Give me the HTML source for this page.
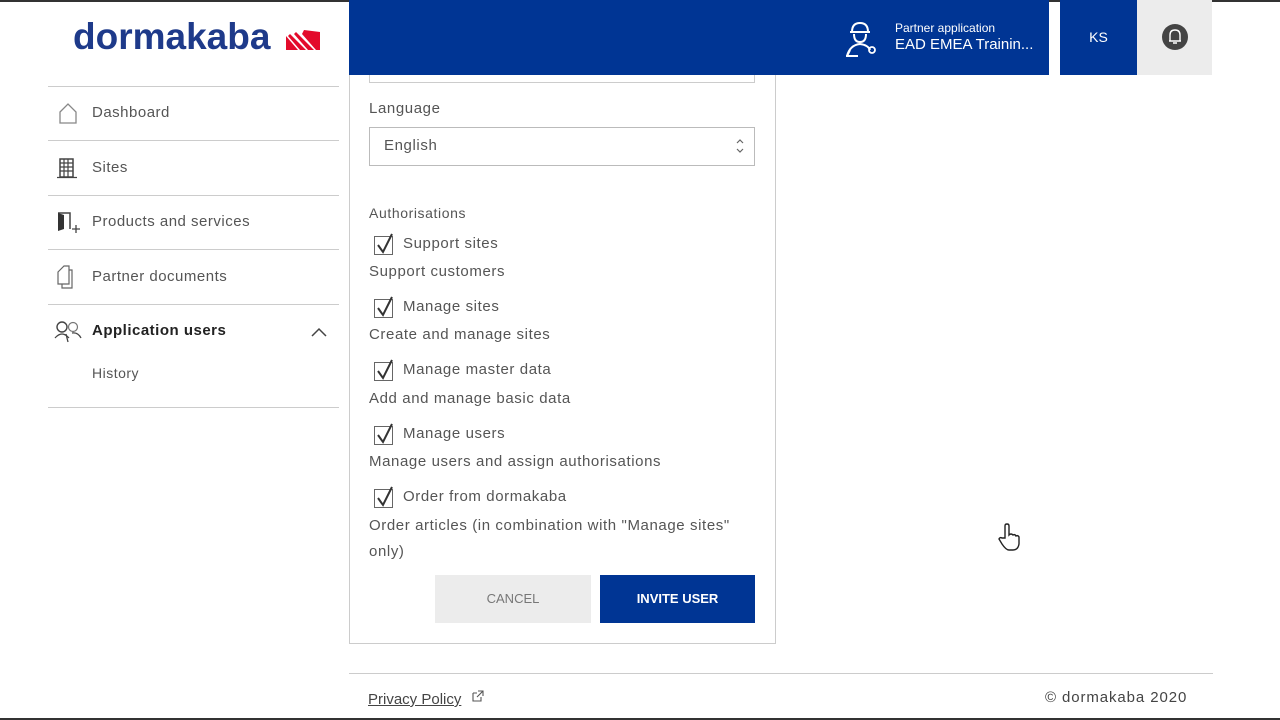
<!DOCTYPE html>
<html><head><style>
*{margin:0;padding:0;box-sizing:border-box}
body{width:1280px;height:720px;position:relative;background:#fff;font-family:"Liberation Sans",sans-serif;color:#444;overflow:hidden}
.a{position:absolute}
.nav{left:48px;width:291px;height:1px;background:#ccc}
.ni{left:92px;font-size:15px;color:#555;letter-spacing:0.5px}
.t{font-size:15px;color:#555;left:369px;letter-spacing:0.6px}
.cb{left:374px;width:19px;height:19px;border:1.5px solid #666;background:#fff}
.cb svg{position:absolute;left:1px;top:-6px}
</style></head><body>
<div class="a" style="left:0;top:0;width:1280px;height:2px;background:#333"></div>
<div class="a" style="left:0;top:718px;width:1280px;height:2px;background:#333"></div>
<div class="a" style="left:73px;top:16px;font-size:37px;font-weight:bold;color:#1e3a8a;letter-spacing:0px">dormakaba</div>
<svg class="a" style="left:286px;top:28px" width="34" height="22"><polygon points="0,8 12,22 0,22" fill="#e30b2b"/><polygon points="4,6 20,22 14,22 2,8" fill="#e30b2b"/><polygon points="10,4 28,22 22,22 8,6" fill="#e30b2b"/><polygon points="18,2 34,4 34,22 30,22 16,6" fill="#e30b2b"/></svg>
<div class="a nav" style="top:86px"></div>
<div class="a nav" style="top:140px"></div>
<div class="a nav" style="top:195px"></div>
<div class="a nav" style="top:249px"></div>
<div class="a nav" style="top:304px"></div>
<div class="a nav" style="top:407px"></div>
<svg class="a" style="left:58px;top:102px" width="20" height="22"><path d="M2 10 L10 2 L18 10 V21 H2 Z" fill="none" stroke="#888" stroke-width="1.3"/></svg>
<svg class="a" style="left:56px;top:157px" width="22" height="22"><rect x="4" y="2" width="13" height="18" fill="none" stroke="#444" stroke-width="1.5"/><path d="M8 2V20M12 2V20M4 6H17M4 10H17M4 14H17M1 20.5H21" stroke="#444" stroke-width="1.2"/></svg>
<svg class="a" style="left:56px;top:211px" width="24" height="24"><path d="M2 2H14V18" fill="none" stroke="#444" stroke-width="1.5"/><path d="M2 2V20L8 18V4Z" fill="#333"/><path d="M16 18H24M20 14V22" stroke="#444" stroke-width="1.3"/></svg>
<svg class="a" style="left:56px;top:264px" width="22" height="26"><path d="M6 6H16V24H6Z" fill="none" stroke="#666" stroke-width="1.2"/><path d="M2 8L8 2H13V20H2Z" fill="#fff" stroke="#666" stroke-width="1.2"/></svg>
<svg class="a" style="left:54px;top:320px" width="28" height="24"><circle cx="8" cy="7" r="5" fill="none" stroke="#444" stroke-width="1.4"/><circle cx="19" cy="7" r="4.5" fill="none" stroke="#777" stroke-width="1.2"/><path d="M1 18 Q8 10 15 18M12 14 L14 22M18 13 Q24 12 27 18" fill="none" stroke="#444" stroke-width="1.3"/></svg>
<div class="a ni" style="top:104px">Dashboard</div>
<div class="a ni" style="top:159px">Sites</div>
<div class="a ni" style="top:213px">Products and services</div>
<div class="a ni" style="top:268px">Partner documents</div>
<div class="a ni" style="top:322px;font-weight:bold;color:#222">Application users</div>
<svg class="a" style="left:310px;top:326px" width="18" height="12"><path d="M2 10L9 3L16 10" fill="none" stroke="#444" stroke-width="1.5"/></svg>
<div class="a ni" style="top:365px;font-size:14px">History</div>

<div class="a" style="left:349px;top:0;width:700px;height:75px;background:#003594"></div>
<svg class="a" style="left:842px;top:20px" width="36" height="38"><path d="M10 12 Q10 3 18 3 Q26 3 26 12 Z M8 12H28" fill="none" stroke="#fff" stroke-width="2"/><path d="M12 14 Q12 22 18 22 Q24 22 24 14" fill="none" stroke="#fff" stroke-width="2"/><path d="M5 36 Q8 25 18 24 Q26 25 28 30M4 36H16M8 30L5 36" fill="none" stroke="#fff" stroke-width="2"/><circle cx="30" cy="30" r="3" fill="none" stroke="#fff" stroke-width="1.8"/></svg>
<div class="a" style="left:895px;top:21px;font-size:12px;color:#fff">Partner application</div>
<div class="a" style="left:895px;top:36px;font-size:15px;color:#fff">EAD EMEA Trainin...</div>
<div class="a" style="left:1060px;top:0;width:77px;height:75px;background:#003594;color:#fff;font-size:14px;text-align:center;line-height:74px">KS</div>
<div class="a" style="left:1137px;top:0;width:75px;height:75px;background:#ececec"></div>
<div class="a" style="left:1162px;top:24px;width:26px;height:26px;border-radius:50%;background:#444"></div>
<svg class="a" style="left:1162px;top:24px" width="26" height="26"><path d="M8 17V11Q8 6 13 6Q18 6 18 11V17H19H7Z M11 19H15" fill="none" stroke="#fff" stroke-width="1.4"/></svg>

<div class="a" style="left:349px;top:75px;width:427px;height:569px;border:1px solid #ccc;border-top:none"></div>
<div class="a" style="left:369px;top:75px;width:386px;height:8px;border:1px solid #ccc;border-top:none"></div>
<div class="a t" style="top:100px">Language</div>
<div class="a" style="left:369px;top:127px;width:386px;height:39px;border:1px solid #bbb"></div>
<div class="a t" style="left:384px;top:137px">English</div>
<svg class="a" style="left:734px;top:137px" width="12" height="18"><path d="M3 6L6 3L9 6M3 12L6 15L9 12" fill="none" stroke="#666" stroke-width="1.2"/></svg>
<div class="a t" style="top:205px;font-size:14px">Authorisations</div>

<div class="a cb" style="top:236px"><svg width="20" height="24"><path d="M2 14L7 21L16 3" fill="none" stroke="#333" stroke-width="2"/></svg></div>
<div class="a t" style="left:403px;top:235px">Support sites</div>
<div class="a t" style="top:263px">Support customers</div>
<div class="a cb" style="top:299px"><svg width="20" height="24"><path d="M2 14L7 21L16 3" fill="none" stroke="#333" stroke-width="2"/></svg></div>
<div class="a t" style="left:403px;top:298px">Manage sites</div>
<div class="a t" style="top:326px">Create and manage sites</div>
<div class="a cb" style="top:362px"><svg width="20" height="24"><path d="M2 14L7 21L16 3" fill="none" stroke="#333" stroke-width="2"/></svg></div>
<div class="a t" style="left:403px;top:361px">Manage master data</div>
<div class="a t" style="top:390px">Add and manage basic data</div>
<div class="a cb" style="top:426px"><svg width="20" height="24"><path d="M2 14L7 21L16 3" fill="none" stroke="#333" stroke-width="2"/></svg></div>
<div class="a t" style="left:403px;top:425px">Manage users</div>
<div class="a t" style="top:453px">Manage users and assign authorisations</div>
<div class="a cb" style="top:489px"><svg width="20" height="24"><path d="M2 14L7 21L16 3" fill="none" stroke="#333" stroke-width="2"/></svg></div>
<div class="a t" style="left:403px;top:488px">Order from dormakaba</div>
<div class="a t" style="top:513px;line-height:26px;width:385px">Order articles (in combination with "Manage sites" only)</div>

<div class="a" style="left:435px;top:575px;width:156px;height:48px;background:#ececec;color:#777;font-size:13px;text-align:center;line-height:48px">CANCEL</div>
<div class="a" style="left:600px;top:575px;width:155px;height:48px;background:#003594;color:#fff;font-size:13px;font-weight:bold;text-align:center;line-height:48px">INVITE USER</div>

<svg class="a" style="left:996px;top:522px" width="26" height="30"><path d="M9 16V4Q9 2 11 2Q13 2 13 4V13Q15 11 17 13Q19 12 20 14Q22 13 23 15V22Q22 28 17 28H13Q10 28 6 22L3 17Q4 15 6 16Z" fill="#fff" stroke="#222" stroke-width="1.4"/></svg>

<div class="a" style="left:349px;top:673px;width:864px;height:1px;background:#ccc"></div>
<div class="a" style="left:368px;top:691px;font-size:15px;color:#444;text-decoration:underline">Privacy Policy</div>
<svg class="a" style="left:472px;top:690px" width="12" height="12"><path d="M1 3H5M1 3V11H9V7M6 1H11V6M11 1L5 7" fill="none" stroke="#555" stroke-width="1.1"/></svg>
<div class="a" style="left:1045px;top:689px;font-size:15px;color:#444;letter-spacing:0.9px">© dormakaba 2020</div>
</body></html>
